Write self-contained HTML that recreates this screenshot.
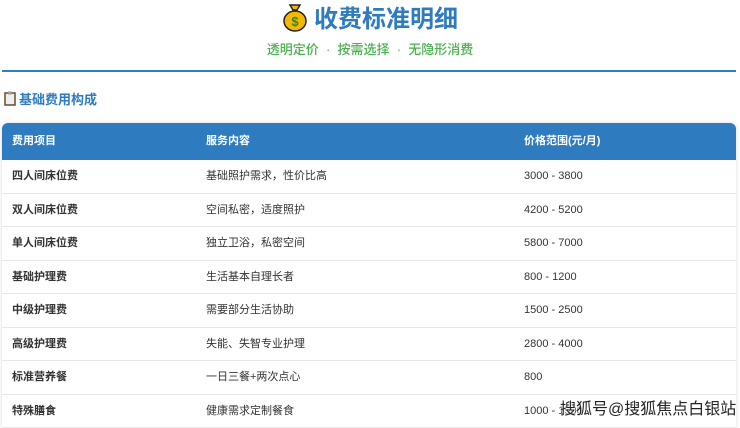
<!DOCTYPE html>
<html><head><meta charset="utf-8"><style>
body{margin:0;width:740px;height:426px;overflow:hidden;background:#fff;font-family:"Liberation Sans","Noto Sans CJK SC",sans-serif;position:relative}
.t{position:absolute;left:0;width:740px;top:2px;text-align:center;font-size:24px;font-weight:bold;color:#2e7bbf;line-height:32px}
.s{position:absolute;left:0;width:740px;top:41px;text-align:center;font-size:13px;color:#4caf50;line-height:18px;font-weight:500}
.hr{position:absolute;left:2px;width:734px;top:70px;height:2px;background:#2f7fc1}
.sec{position:absolute;left:4px;top:91px;font-size:13px;font-weight:bold;color:#2e7bbf;line-height:18px}
.tb{position:absolute;left:2px;top:123px;width:734px;border-radius:6px 6px 0 0;box-shadow:0 0 4px rgba(0,0,0,.15);overflow:hidden}
.r{height:33.5px;position:relative;border-bottom:1px solid #e8e8e8;box-sizing:border-box;font-size:11px;color:#333;background:#fff}
.r span{position:absolute;top:0;line-height:33px}
.c1{left:10px;font-weight:bold}.c2{left:204px}.c3{left:522px}
.h{background:#2e7bbf;color:#fff;height:37px;font-weight:bold;border:none}
.h span{line-height:37px}
.wm{position:absolute;left:560px;top:399px;font-size:16px;color:#222;white-space:nowrap;text-shadow:0 0 2px #fff,0 0 2px #fff;line-height:22px}
</style></head><body>
<div class="t"><svg width="26" height="30" viewBox="0 0 26 30" style="vertical-align:-5px;margin-right:6px"><path d="M8 3h10l-3 5h-4z" fill="#f5b800" stroke="#222" stroke-width="1.5"/><ellipse cx="13" cy="19" rx="11" ry="10" fill="#f5b800" stroke="#222" stroke-width="1.5"/><text x="13" y="24" font-size="13" text-anchor="middle" fill="#2a8a2a" font-family="Liberation Sans">$</text></svg>收费标准明细</div>
<div class="s">透明定价 &nbsp;·&nbsp; 按需选择 &nbsp;·&nbsp; 无隐形消费</div>
<div class="hr"></div>
<div class="sec"><svg width="12" height="15" viewBox="0 0 12 15" style="vertical-align:-2px;margin-right:3px"><rect x="1" y="2" width="10" height="12" fill="#eee" stroke="#6b4a2a" stroke-width="1.5"/><rect x="4" y="0.5" width="4" height="3" fill="#999"/></svg>基础费用构成</div>
<div class="tb">
<div class="r h"><span class="c1">费用项目</span><span class="c2">服务内容</span><span class="c3">价格范围(元/月)</span></div>
<div class="r"><span class="c1">四人间床位费</span><span class="c2">基础照护需求，性价比高</span><span class="c3">3000 - 3800</span></div>
<div class="r"><span class="c1">双人间床位费</span><span class="c2">空间私密，适度照护</span><span class="c3">4200 - 5200</span></div>
<div class="r"><span class="c1">单人间床位费</span><span class="c2">独立卫浴，私密空间</span><span class="c3">5800 - 7000</span></div>
<div class="r"><span class="c1">基础护理费</span><span class="c2">生活基本自理长者</span><span class="c3">800 - 1200</span></div>
<div class="r"><span class="c1">中级护理费</span><span class="c2">需要部分生活协助</span><span class="c3">1500 - 2500</span></div>
<div class="r"><span class="c1">高级护理费</span><span class="c2">失能、失智专业护理</span><span class="c3">2800 - 4000</span></div>
<div class="r"><span class="c1">标准营养餐</span><span class="c2">一日三餐+两次点心</span><span class="c3">800</span></div>
<div class="r"><span class="c1">特殊膳食</span><span class="c2">健康需求定制餐食</span><span class="c3">1000 - 1500</span></div>
</div>
<div class="wm">搜狐号@搜狐焦点白银站</div>
</body></html>
